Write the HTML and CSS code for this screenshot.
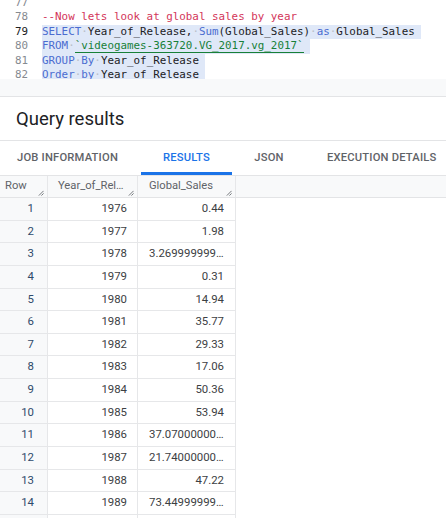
FILE: index.html
```html
<!DOCTYPE html>
<html>
<head>
<meta charset="utf-8">
<link rel="stylesheet" href="styles.css">
</head>
<body>
<div class="editor">
  <div class="lines">
    <div class="line"><span class="ln">77</span><span class="code"></span></div>
    <div class="line"><span class="ln">78</span><span class="code"><span class="cm">--Now lets look at global sales by year</span></span></div>
    <div class="line"><span class="ln cur">79</span><span class="code"><span class="sel"><span class="kw">SELECT</span><span class="ws">·</span>Year_of_Release,<span class="ws">·</span><span class="kw">Sum</span>(Global_Sales)<span class="ws">·</span><span class="kw">as</span><span class="ws">·</span>Global_Sales</span></span></div>
    <div class="line"><span class="ln">80</span><span class="code"><span class="sel"><span class="kw">FROM</span><span class="ws">·</span><span class="str">`videogames-363720.VG_2017.vg_2017`</span></span></span></div>
    <div class="line"><span class="ln">81</span><span class="code"><span class="sel"><span class="kw">GROUP</span><span class="ws">·</span><span class="kw">By</span><span class="ws">·</span>Year_of_Release</span></span></div>
    <div class="line"><span class="ln">82</span><span class="code"><span class="sel"><span class="kw">Order</span><span class="ws">·</span><span class="kw">by</span><span class="ws">·</span>Year_of_Release</span></span></div>
  </div>
</div>
<div class="band"></div>
<div class="title">Query results</div>
<div class="tabs">
  <div class="tab">JOB INFORMATION</div>
  <div class="tab active">RESULTS</div>
  <div class="tab">JSON</div>
  <div class="tab">EXECUTION DETAILS</div>
</div>
<div class="grid">
  <div class="row head">
    <div class="cell">Row<svg class="rs" viewBox="0 0 7 7"><path d="M1 6.5L6.5 1M4 6.5L6.5 4" stroke="#5f6368" stroke-width="1" fill="none"/></svg></div>
    <div class="cell">Year_of_Release<svg class="rs" viewBox="0 0 7 7"><path d="M1 6.5L6.5 1M4 6.5L6.5 4" stroke="#5f6368" stroke-width="1" fill="none"/></svg></div>
    <div class="cell">Global_Sales<svg class="rs" viewBox="0 0 7 7"><path d="M1 6.5L6.5 1M4 6.5L6.5 4" stroke="#5f6368" stroke-width="1" fill="none"/></svg></div>
    <div class="cell fill"></div>
  </div>
  <div class="row"><div class="cell num">1</div><div class="cell">1976</div><div class="cell">0.44</div></div>
  <div class="row"><div class="cell num">2</div><div class="cell">1977</div><div class="cell">1.98</div></div>
  <div class="row"><div class="cell num">3</div><div class="cell">1978</div><div class="cell">3.2699999999999996</div></div>
  <div class="row"><div class="cell num">4</div><div class="cell">1979</div><div class="cell">0.31</div></div>
  <div class="row"><div class="cell num">5</div><div class="cell">1980</div><div class="cell">14.94</div></div>
  <div class="row"><div class="cell num">6</div><div class="cell">1981</div><div class="cell">35.77</div></div>
  <div class="row"><div class="cell num">7</div><div class="cell">1982</div><div class="cell">29.33</div></div>
  <div class="row"><div class="cell num">8</div><div class="cell">1983</div><div class="cell">17.06</div></div>
  <div class="row"><div class="cell num">9</div><div class="cell">1984</div><div class="cell">50.36</div></div>
  <div class="row"><div class="cell num">10</div><div class="cell">1985</div><div class="cell">53.94</div></div>
  <div class="row"><div class="cell num">11</div><div class="cell">1986</div><div class="cell">37.070000000000007</div></div>
  <div class="row"><div class="cell num">12</div><div class="cell">1987</div><div class="cell">21.740000000000002</div></div>
  <div class="row"><div class="cell num">13</div><div class="cell">1988</div><div class="cell">47.22</div></div>
  <div class="row"><div class="cell num">14</div><div class="cell">1989</div><div class="cell">73.449999999999989</div></div>
  <div class="row"><div class="cell num">15</div><div class="cell">1990</div><div class="cell">49.39</div></div>
</div>
</body>
</html>
```
FILE: styles.css
```css
html, body {
  margin: 0;
  padding: 0;
  background: #fff;
  font-family: Roboto, "Noto Sans", Arial, sans-serif;
  overflow: hidden;
}
.editor {
  height: 79px;
  overflow: hidden;
  background: #fff;
}
.lines {
  margin-top: -4px;
}
.line {
  display: flex;
  height: 14.4px;
  line-height: 14.4px;
  font-family: "DejaVu Sans Mono", "Liberation Mono", monospace;
  font-size: 10.86px;
  color: #202124;
  white-space: pre;
}
.ln {
  width: 28px;
  padding-right: 14px;
  text-align: right;
  color: #858a90;
  flex: none;
}
.ln.cur { color: #202124; }
.code { display: flex; }
.sel {
  background: #dfe8f8;
  padding-right: 6px;
}
.cm { color: #d3365a; }
.kw { color: #4a6cd0; }
.ws { color: #b9bfc8; }
.str {
  color: #188038;
  border-bottom: 1px solid #188038;
}
.band {
  height: 17px;
  background: #f8f9fa;
  border-bottom: 1px solid #e3e4e6;
}
.title {
  height: 43px;
  line-height: 44px;
  padding-left: 16px;
  font-size: 18.5px;
  color: #202124;
  border-bottom: 1px solid #e3e4e6;
}
.tabs {
  display: flex;
  height: 34px;
  border-bottom: 1px solid #e3e4e6;
  white-space: nowrap;
}
.tab {
  box-sizing: border-box;
  height: 34px;
  line-height: 33px;
  font-size: 11.2px;
  font-weight: 500;
  letter-spacing: 0.2px;
  color: #5f6368;
  text-align: center;
  flex: none;
}
.tab:nth-child(1) { width: 141px; padding-right: 6px; }
.tab:nth-child(2) { width: 91px; }
.tab:nth-child(3) { width: 74px; }
.tab:nth-child(4) { width: 160px; padding-left: 21px; text-align: left; }
.tab.active {
  color: #1a73e8;
  border-bottom: 3px solid #1a73e8;
}
.grid {
  font-size: 11.4px;
  color: #3c4043;
}
.row {
  display: grid;
  grid-template-columns: 48px 90px 98px 1fr;
  height: 22.64px;
}
.cell {
  box-sizing: border-box;
  border-right: 1px solid #e6e7e9;
  border-bottom: 1px solid #e6e7e9;
  text-align: right;
  padding-left: 11px;
  padding-right: 11px;
  line-height: 21.6px;
  white-space: nowrap;
  overflow: hidden;
  text-overflow: ellipsis;
}
.row .cell:nth-child(2) { padding-right: 10px; }
.cell.num {
  background: #f8f9fa;
  padding-left: 2px;
  padding-right: 13px;
  color: #2f4a6b;
}
.row.head {
  height: 21px;
  background: #f8f9fa;
  border-bottom: 1px solid #e3e4e6;
}
.row.head .cell {
  position: relative;
  border-bottom: none;
  text-align: left;
  color: #5f6368;
  font-size: 11.2px;
  line-height: 20px;
  padding-left: 11px;
  padding-right: 12px;
}
.row.head .cell:nth-child(1) { padding-left: 5px; }
.row.head .cell:nth-child(2) { padding-left: 10px; }
.row.head .cell.fill { border-right: none; }
.rs {
  position: absolute;
  right: 3px;
  bottom: 1px;
  width: 6px;
  height: 6px;
}
```
